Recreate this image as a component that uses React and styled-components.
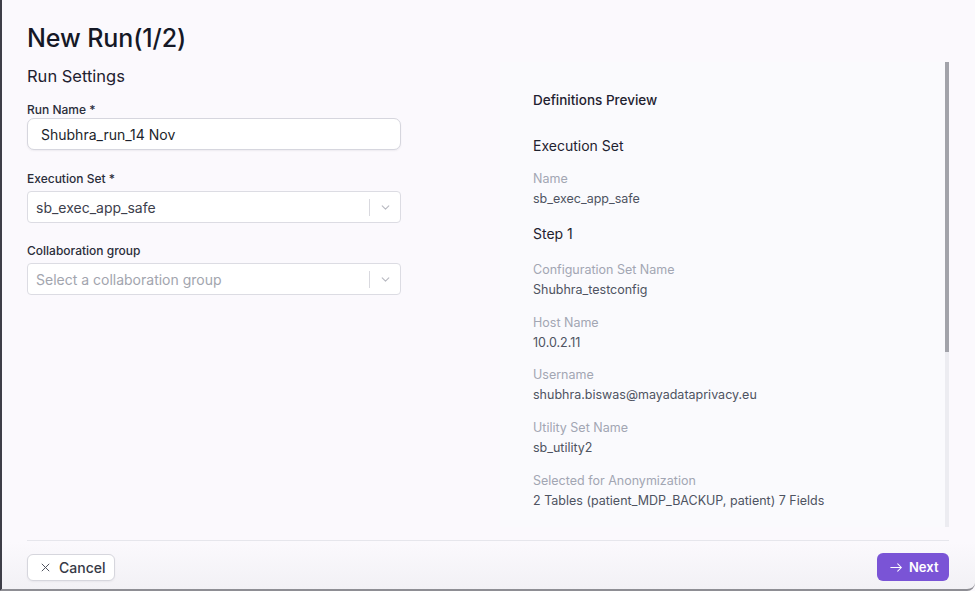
import React from "react";
import styled, { createGlobalStyle } from "styled-components";

const Global = createGlobalStyle`
  * { box-sizing: border-box; }
  html, body { margin: 0; padding: 0; background: #fbf9fd; }
  body { font-family: Inter, "Noto Sans", sans-serif; color: #1f2230; }
`;

const Frame = styled.div`
  width: 975px;
  height: 591px;
  border-left: 2px solid #3e3e48;
  border-bottom: 2px solid #8e8e94;
  border-bottom-right-radius: 8px;
  background: linear-gradient(to bottom, #fbf9fd 0%, #fbf9fd 92%, #f2f1f5 100%);
  display: flex;
  flex-direction: column;
  padding: 0 26px 0 25px;
  overflow: hidden;
`;

const Title = styled.h1`
  margin: 22px 0 0;
  font-size: 25px;
  line-height: 32px;
  font-weight: 500;
  color: #151826;
  letter-spacing: -0.1px;
`;

const Body = styled.div`
  display: grid;
  grid-template-columns: 473px 1fr;
  height: 465px;
  margin-top: 8px;
`;

const LeftCol = styled.div`
  display: flex;
  flex-direction: column;
`;

const SectionTitle = styled.h2`
  margin: 2px 0 14px;
  font-size: 16.5px;
  line-height: 24px;
  font-weight: 400;
  color: #1f2230;
`;

const Field = styled.div`
  display: flex;
  flex-direction: column;
  width: 374px;
  margin-bottom: ${(p) => p.$mb ?? 20}px;
`;

const Label = styled.label`
  font-size: 12px;
  line-height: 16px;
  font-weight: 500;
  color: #2a2d3a;
  margin-bottom: ${(p) => p.$gap}px;
`;

const TextInput = styled.div`
  height: 32px;
  background: #ffffff;
  border: 1px solid #d6d6de;
  border-radius: 7px;
  box-shadow: 0 1px 2px rgba(20, 20, 40, 0.06);
  padding: 0 13px;
  display: flex;
  align-items: center;
  font-size: 14px;
  color: #1c1f2b;
`;

const Select = styled.div`
  height: 32px;
  background: #ffffff;
  border: 1px solid #dcdce3;
  border-radius: 4px;
  display: flex;
  align-items: center;
  padding-left: 8px;
`;

const SelectValue = styled.span`
  flex: 1;
  font-size: 14px;
  color: ${(p) => (p.$placeholder ? "#a2a5ae" : "#3d404c")};
`;

const Indicators = styled.div`
  display: flex;
  align-items: center;
  height: 100%;
`;

const Separator = styled.span`
  width: 1px;
  height: 17px;
  background: #d9d9df;
`;

const Chevron = styled.span`
  width: 30px;
  display: flex;
  justify-content: center;
  align-items: center;
  color: #b8b9c1;
`;

const Preview = styled.div`
  height: 465px;
  display: flex;
  background: #fafafd;
`;

const PreviewContent = styled.div`
  flex: 1;
  overflow: hidden;
  padding: 28px 0 0 33px;
  display: flex;
  flex-direction: column;
`;

const ScrollTrack = styled.div`
  width: 4px;
  background: #ececf1;
  display: flex;
  flex-direction: column;
`;

const ScrollThumb = styled.div`
  height: 290px;
  background: #a2a3aa;
`;

const PreviewHeading = styled.div`
  font-size: 13.5px;
  line-height: 20px;
  font-weight: 500;
  color: #1f2230;
  margin-bottom: 26px;
`;

const GroupHeading = styled.div`
  font-size: 14px;
  line-height: 20px;
  font-weight: 400;
  color: #1f2230;
  margin-bottom: ${(p) => p.$mb}px;
`;

const Pair = styled.div`
  display: flex;
  flex-direction: column;
  margin-bottom: ${(p) => p.$mb ?? 12.7}px;
`;

const PairLabel = styled.div`
  font-size: 12.5px;
  line-height: 20px;
  color: #a2a6b3;
`;

const PairValue = styled.div`
  font-size: 12.5px;
  line-height: 20px;
  color: #4e5361;
`;

const Divider = styled.div`
  height: 1px;
  background: #e6e6ec;
  margin-top: 13px;
`;

const Footer = styled.div`
  display: flex;
  justify-content: space-between;
  align-items: center;
  padding-top: 12px;
`;

const CancelButton = styled.button`
  display: flex;
  align-items: center;
  gap: 8px;
  height: 27px;
  width: 88px;
  padding: 0 0 0 12px;
  background: #ffffff;
  border: 1px solid #d6d6dd;
  border-radius: 6px;
  box-shadow: 0 1px 2px rgba(20, 20, 40, 0.05);
  font-family: inherit;
  font-size: 14px;
  font-weight: 500;
  color: #363946;
`;

const NextButton = styled.button`
  display: flex;
  align-items: center;
  gap: 6px;
  height: 28px;
  width: 72px;
  padding: 0 0 0 13px;
  background: #7a54d6;
  border: none;
  border-radius: 6px;
  font-family: inherit;
  font-size: 13px;
  font-weight: 600;
  color: #ffffff;
`;

const ChevronIcon = () => (
  <svg width="11" height="11" viewBox="0 0 20 20" fill="none">
    <path d="M4 7l6 6 6-6" stroke="currentColor" strokeWidth="2" strokeLinecap="round" strokeLinejoin="round" />
  </svg>
);

const XIcon = () => (
  <svg width="11" height="11" viewBox="0 0 16 16" fill="none">
    <path d="M3 3l10 10M13 3L3 13" stroke="#4a4d5a" strokeWidth="1.4" strokeLinecap="round" />
  </svg>
);

const ArrowIcon = () => (
  <svg width="13" height="11" viewBox="0 0 16 12" fill="none">
    <path d="M1 6h13M9.5 1.5L14 6l-4.5 4.5" stroke="#ffffff" strokeWidth="1.3" strokeLinecap="round" strokeLinejoin="round" />
  </svg>
);

const SelectBox = ({ value, placeholder }) => (
  <Select>
    <SelectValue $placeholder={!value}>{value || placeholder}</SelectValue>
    <Indicators>
      <Separator />
      <Chevron>
        <ChevronIcon />
      </Chevron>
    </Indicators>
  </Select>
);

const details = [
  ["Configuration Set Name", "Shubhra_testconfig"],
  ["Host Name", "10.0.2.11"],
  ["Username", "shubhra.biswas@mayadataprivacy.eu"],
  ["Utility Set Name", "sb_utility2"],
  ["Selected for Anonymization", "2 Tables (patient_MDP_BACKUP, patient) 7 Fields"],
];

export default function App() {
  return (
    <>
      <Global />
      <Frame>
        <Title>New Run(1/2)</Title>
        <Body>
          <LeftCol>
            <SectionTitle>Run Settings</SectionTitle>
            <Field $mb={21}>
              <Label $gap={0}>Run Name *</Label>
              <TextInput>Shubhra_run_14 Nov</TextInput>
            </Field>
            <Field>
              <Label $gap={4}>Execution Set *</Label>
              <SelectBox value="sb_exec_app_safe" />
            </Field>
            <Field>
              <Label $gap={4}>Collaboration group</Label>
              <SelectBox placeholder="Select a collaboration group" />
            </Field>
          </LeftCol>
          <Preview>
            <PreviewContent>
              <PreviewHeading>Definitions Preview</PreviewHeading>
              <GroupHeading $mb={13}>Execution Set</GroupHeading>
              <Pair $mb={15}>
                <PairLabel>Name</PairLabel>
                <PairValue>sb_exec_app_safe</PairValue>
              </Pair>
              <GroupHeading $mb={16}>Step 1</GroupHeading>
              {details.map(([k, v]) => (
                <Pair key={k}>
                  <PairLabel>{k}</PairLabel>
                  <PairValue>{v}</PairValue>
                </Pair>
              ))}
            </PreviewContent>
            <ScrollTrack>
              <ScrollThumb />
            </ScrollTrack>
          </Preview>
        </Body>
        <Divider />
        <Footer>
          <CancelButton>
            <XIcon />
            Cancel
          </CancelButton>
          <NextButton>
            <ArrowIcon />
            Next
          </NextButton>
        </Footer>
      </Frame>
    </>
  );
}
